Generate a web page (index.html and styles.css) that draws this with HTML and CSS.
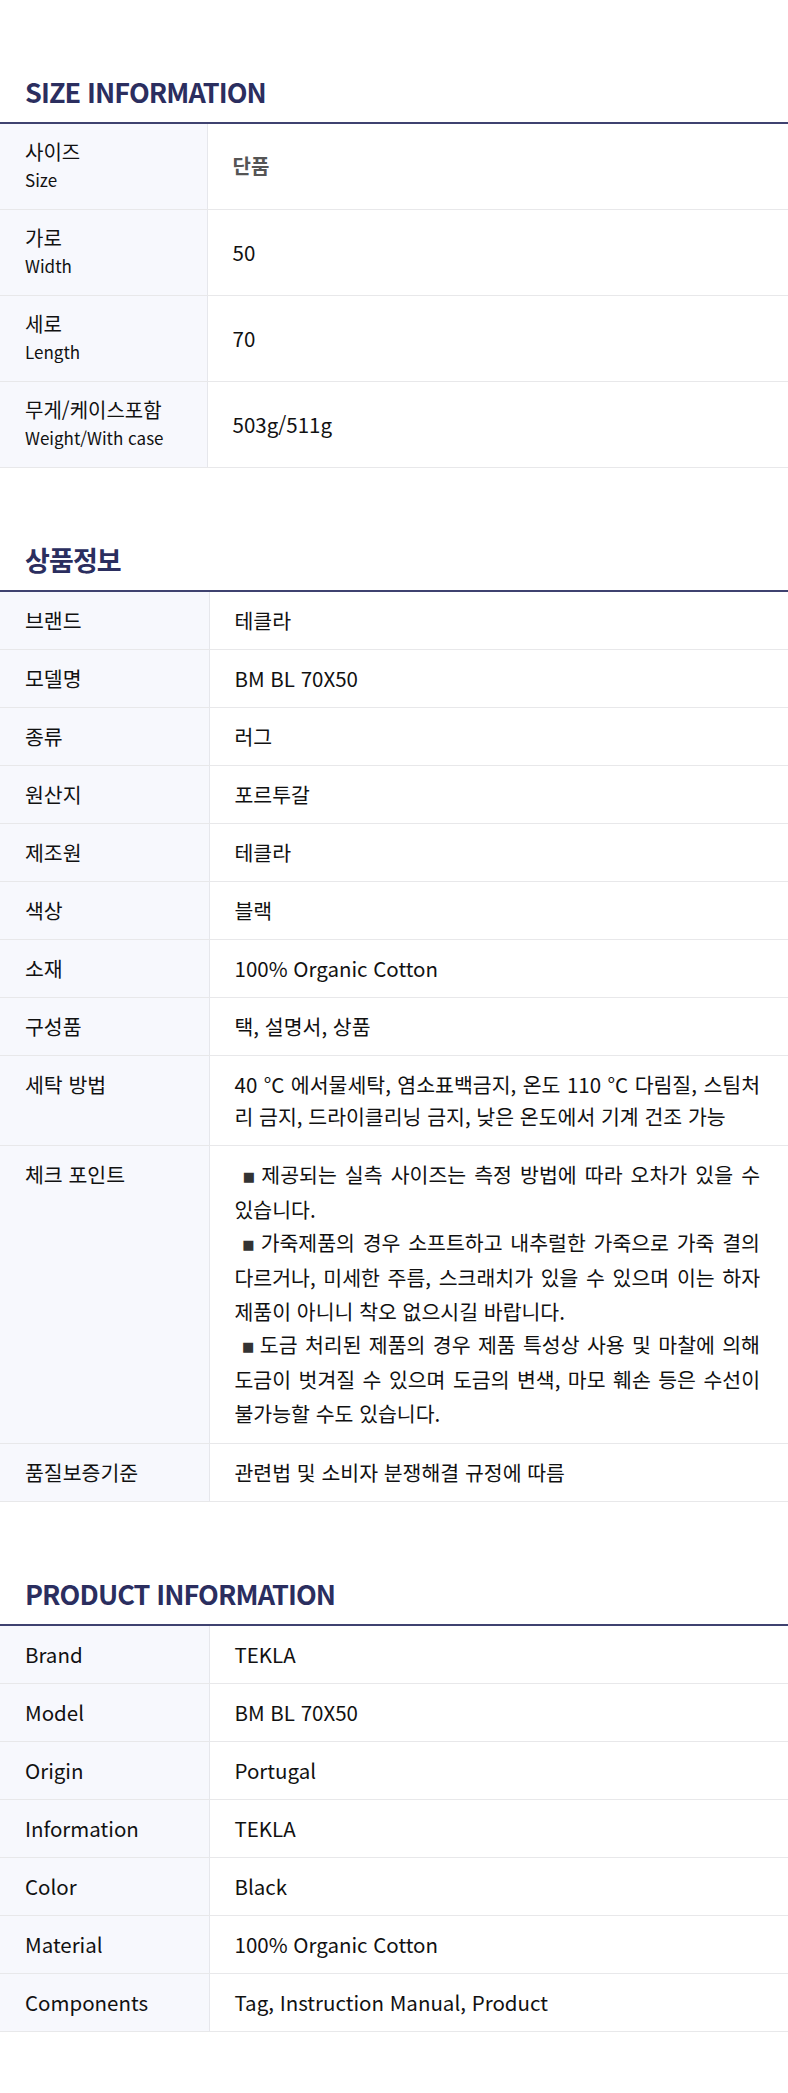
FILE: index.html
```html
<!DOCTYPE html>
<html lang="ko">
<head>
    <meta charset="UTF-8">
    <meta name="viewport" content="width=device-width, initial-scale=1.0">
    <title>상품 정보</title>
    <link rel="stylesheet" href="styles.css">
</head>
<body>
    <section class="info">
        <h2 class="info-title">SIZE INFORMATION</h2>
        <table class="info-table size-table">
            <tr>
                <th><span class="ko">사이즈</span><span class="en">Size</span></th>
                <td class="muted">단품</td>
            </tr>
            <tr>
                <th><span class="ko">가로</span><span class="en">Width</span></th>
                <td>50</td>
            </tr>
            <tr>
                <th><span class="ko">세로</span><span class="en">Length</span></th>
                <td>70</td>
            </tr>
            <tr>
                <th><span class="ko">무게/케이스포함</span><span class="en">Weight/With case</span></th>
                <td>503g/511g</td>
            </tr>
        </table>
    </section>

    <section class="info">
        <h2 class="info-title">상품정보</h2>
        <table class="info-table">
            <tr><th>브랜드</th><td>테클라</td></tr>
            <tr><th>모델명</th><td>BM BL 70X50</td></tr>
            <tr><th>종류</th><td>러그</td></tr>
            <tr><th>원산지</th><td>포르투갈</td></tr>
            <tr><th>제조원</th><td>테클라</td></tr>
            <tr><th>색상</th><td>블랙</td></tr>
            <tr><th>소재</th><td>100% Organic Cotton</td></tr>
            <tr><th>구성품</th><td>택, 설명서, 상품</td></tr>
            <tr><th>세탁 방법</th><td>40 °C 에서물세탁, 염소표백금지, 온도 110 °C 다림질, 스팀처리 금지, 드라이클리닝 금지, 낮은 온도에서 기계 건조 가능</td></tr>
            <tr>
                <th>체크 포인트</th>
                <td class="notes">
                    <span class="note">&nbsp;<span class="mark">■</span>제공되는 실측 사이즈는 측정 방법에 따라 오차가 있을 수 있습니다.</span>
                    <span class="note">&nbsp;<span class="mark">■</span>가죽제품의 경우 소프트하고 내추럴한 가죽으로 가죽 결의 다르거나, 미세한 주름, 스크래치가 있을 수 있으며 이는 하자 제품이 아니니 착오 없으시길 바랍니다.</span>
                    <span class="note">&nbsp;<span class="mark">■</span>도금 처리된 제품의 경우 제품 특성상 사용 및 마찰에 의해 도금이 벗겨질 수 있으며 도금의 변색, 마모 훼손 등은 수선이 불가능할 수도 있습니다.</span>
                </td>
            </tr>
            <tr><th>품질보증기준</th><td>관련법 및 소비자 분쟁해결 규정에 따름</td></tr>
        </table>
    </section>

    <section class="info">
        <h2 class="info-title">PRODUCT INFORMATION</h2>
        <table class="info-table">
            <tr><th>Brand</th><td>TEKLA</td></tr>
            <tr><th>Model</th><td>BM BL 70X50</td></tr>
            <tr><th>Origin</th><td>Portugal</td></tr>
            <tr><th>Information</th><td>TEKLA</td></tr>
            <tr><th>Color</th><td>Black</td></tr>
            <tr><th>Material</th><td>100% Organic Cotton</td></tr>
            <tr><th>Components</th><td>Tag, Instruction Manual, Product</td></tr>
        </table>
    </section>
</body>
</html>
```

FILE: styles.css
```css
body {
    font-family: "Noto Sans CJK KR", "Noto Sans", sans-serif;
    background-color: #fff;
    color: #111;
    margin: 0;
    padding: 0 0 66px;
}

.info {
    padding-top: 72px;
}

.info-title {
    font-size: 27px;
    line-height: 40px;
    font-weight: 700;
    color: #2b2e5f;
    margin: 0 0 10px;
    padding: 0 25px;
    letter-spacing: -0.9px;
}

.info-table {
    width: 100%;
    border-collapse: collapse;
    border-top: 2px solid #3f4270;
    font-size: 20.5px;
    line-height: 32px;
}

.info-table th,
.info-table td {
    border-bottom: 1px solid #e8e8ea;
    text-align: left;
    vertical-align: top;
    padding: 12px 28px 13px 25px;
}

.info-table th {
    width: 209px;
    box-sizing: border-box;
    font-weight: 400;
    background-color: #f7f8fd;
    border-right: 1px solid #e6e7ec;
}

.info-table td {
    text-align: justify;
}

.size-table th,
.size-table td {
    height: 86px;
    box-sizing: border-box;
    vertical-align: middle;
    padding-top: 0;
    padding-bottom: 0;
}

.size-table th {
    width: 207px;
}

.size-table .ko {
    display: block;
    font-size: 20px;
    line-height: 28px;
}

.size-table .en {
    display: block;
    font-size: 17px;
    line-height: 28px;
}

.size-table .muted {
    color: #555;
    font-weight: 700;
    font-size: 20px;
}

.notes {
    line-height: 33.3px;
    word-break: keep-all;
}

.note {
    display: block;
}

.mark {
    font-family: "DejaVu Sans", sans-serif;
    font-size: 13px;
    color: #333;
    vertical-align: 2px;
    margin-right: 4px;
}
```
